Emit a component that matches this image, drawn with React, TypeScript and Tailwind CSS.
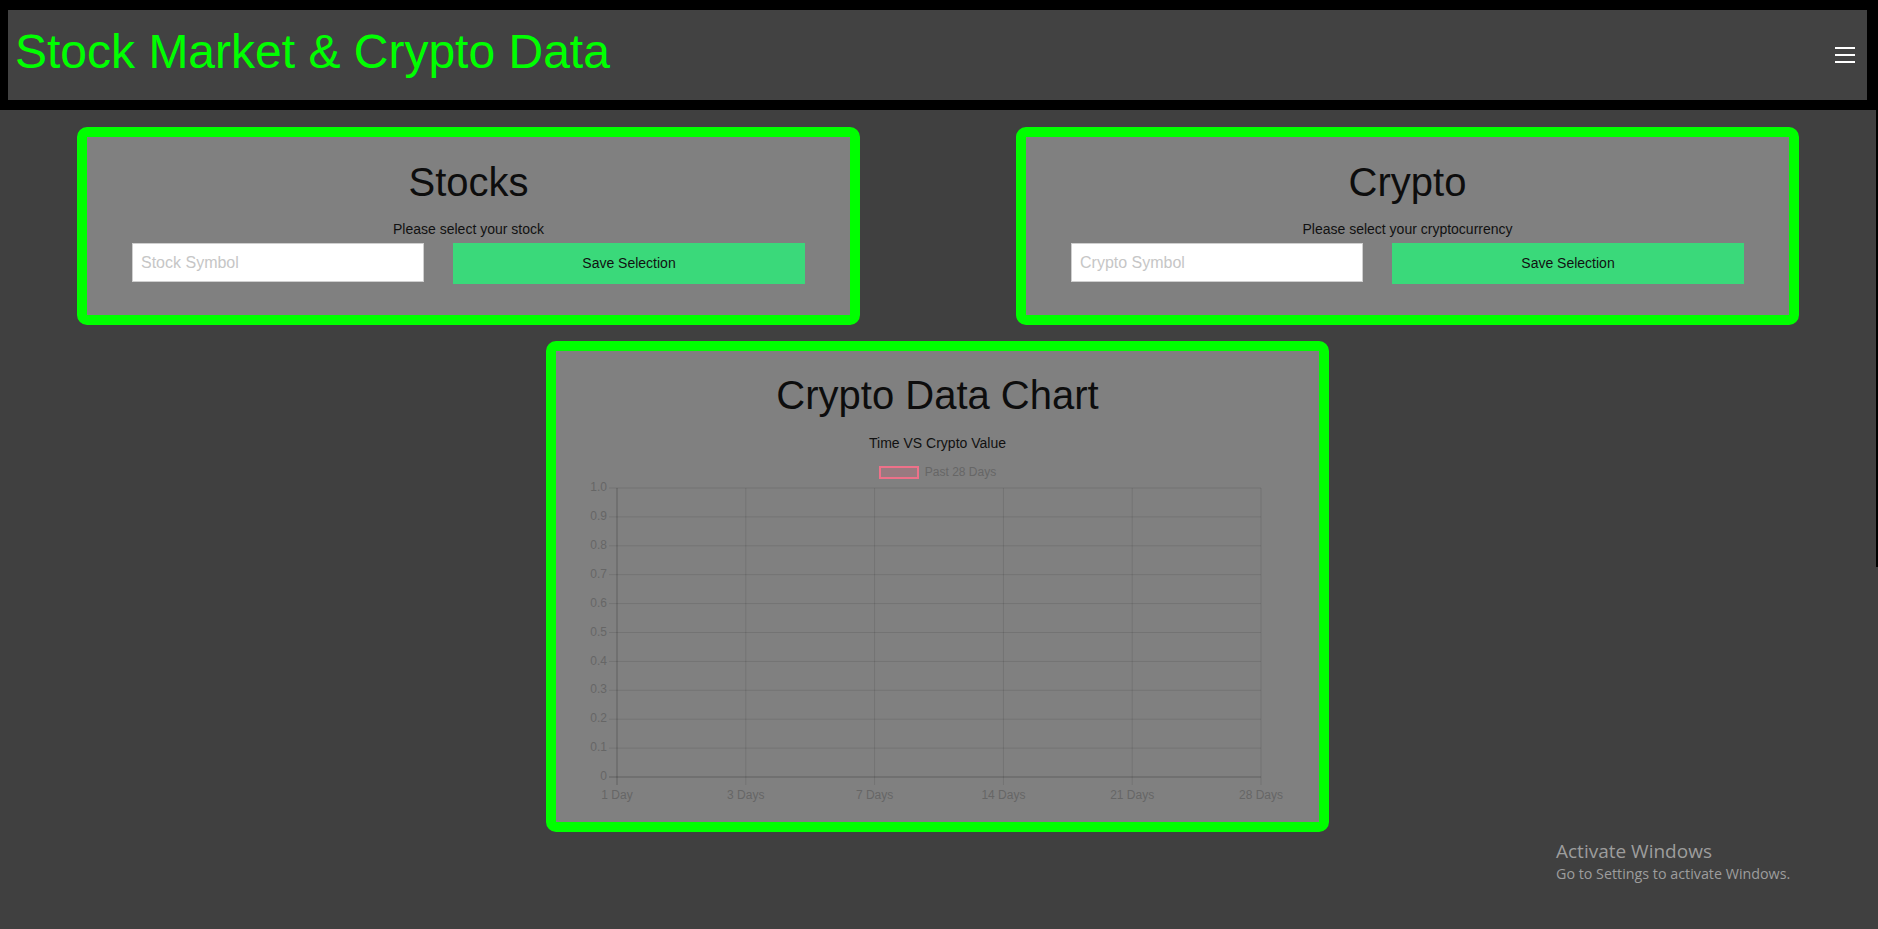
import React from 'react'

const yTicks = ['1.0', '0.9', '0.8', '0.7', '0.6', '0.5', '0.4', '0.3', '0.2', '0.1', '0']
const xTicks = ['1 Day', '3 Days', '7 Days', '14 Days', '21 Days', '28 Days']

// plot box inside the chart svg
const left = 61
const right = 705
const top = 8
const bottom = 297

function SelectCard({ title, label, placeholder }: { title: string, label: string, placeholder: string }) {
    return (
        <div className="w-[783px] rounded-[10px] border-[10px] border-[#00ff00] bg-[#808080] pt-[22px] pb-[31px] text-center">
            <h2 className="text-[40px] leading-[46px] text-[#0d0d0d]">{title}</h2>
            <p className="mt-[16px] text-[14px] leading-[16px] text-[#111]">{label}</p>
            <div className="mt-[6px] flex items-start justify-center gap-[29px]">
                <input
                    type="text"
                    placeholder={placeholder}
                    className="h-[39px] w-[292px] border border-[#cfcfcf] bg-white px-[8px] text-[16px] text-black outline-none placeholder:text-[#c6c6c6]"
                />
                <button className="h-[41px] w-[352px] bg-[#3ad97a] text-[14px] text-[#111]">Save Selection</button>
            </div>
        </div>
    )
}

function Chart() {
    const step = (bottom - top) / 10
    const xStep = (right - left) / 5
    return (
        <svg className="mt-[1px] block" width="762" height="332" viewBox="0 0 762 332">
            {yTicks.map((t, i) => {
                const y = top + i * step
                const last = i === yTicks.length - 1
                return (
                    <g key={t}>
                        <line x1={left - 8} x2={right} y1={y} y2={y} stroke={last ? 'rgba(0,0,0,0.25)' : 'rgba(0,0,0,0.1)'} strokeWidth="1" />
                        <text x={left - 10} y={y} textAnchor="end" dominantBaseline="middle" fontSize="12" fill="#666" fontFamily="'Liberation Sans', Arial, sans-serif">{t}</text>
                    </g>
                )
            })}
            {xTicks.map((t, i) => {
                const x = left + i * xStep
                return (
                    <g key={t}>
                        <line x1={x} x2={x} y1={top} y2={bottom + 8} stroke={i === 0 ? 'rgba(0,0,0,0.25)' : 'rgba(0,0,0,0.1)'} strokeWidth="1" />
                        <text x={x} y={316} textAnchor="middle" dominantBaseline="middle" fontSize="12" fill="#666" fontFamily="'Liberation Sans', Arial, sans-serif">{t}</text>
                    </g>
                )
            })}
        </svg>
    )
}

export default function App() {
    return (
        <div className="relative min-h-[929px] bg-[#404040] font-['Liberation_Sans',Arial,sans-serif]">
            <header className="bg-black pt-[10px] pb-[10px] pl-[8px] pr-[11px]">
                <div className="flex h-[90px] items-center justify-between bg-[#424242] pl-[7px] pr-[12px]">
                    <h1 className="mb-[6px] text-[48px] leading-[54px] text-[#00ff00]">Stock Market &amp; Crypto Data</h1>
                    <button>
                        <svg width="20" height="16" viewBox="0 0 20 16" className="block">
                            <rect x="0" y="0" width="20" height="2" fill="#fff" />
                            <rect x="0" y="7" width="20" height="2" fill="#fff" />
                            <rect x="0" y="14" width="20" height="2" fill="#fff" />
                        </svg>
                    </button>
                </div>
            </header>

            <div className="w-[1875px]">
                <div className="mt-[17px] flex gap-[156px] pl-[77px]">
                    <SelectCard title="Stocks" label="Please select your stock" placeholder="Stock Symbol" />
                    <SelectCard title="Crypto" label="Please select your cryptocurrency" placeholder="Crypto Symbol" />
                </div>

                <div className="mx-auto mt-[16px] w-[783px] rounded-[10px] border-[10px] border-[#00ff00] bg-[#808080] pt-[21px] pb-[10px]">
                    <h2 className="text-center text-[40px] leading-[46px] text-[#0d0d0d]">Crypto Data Chart</h2>
                    <p className="mt-[17px] text-center text-[14px] leading-[16px] text-[#111]">Time VS Crypto Value</p>
                    <div className="mt-[14px] flex h-[14px] items-center justify-center gap-[6px]">
                        <span className="block h-[13px] w-[40px] border-2 border-[#ee7189] bg-[#997a80]"></span>
                        <span className="text-[12px] leading-[14px] text-[#666]">Past 28 Days</span>
                    </div>
                    <Chart />
                </div>
            </div>

            {/* windows watermark sitting over the page */}
            <div className="pointer-events-none absolute left-[1556px] top-[838px] font-['Open_Sans',sans-serif] text-[#9d9d9d]">
                <div className="text-[19px] leading-[26px]">Activate Windows</div>
                <div className="text-[14.3px] leading-[20px]">Go to Settings to activate Windows.</div>
            </div>
            <div className="absolute right-0 top-0 h-[567px] w-[2px] bg-black"></div>
        </div>
    )
}
